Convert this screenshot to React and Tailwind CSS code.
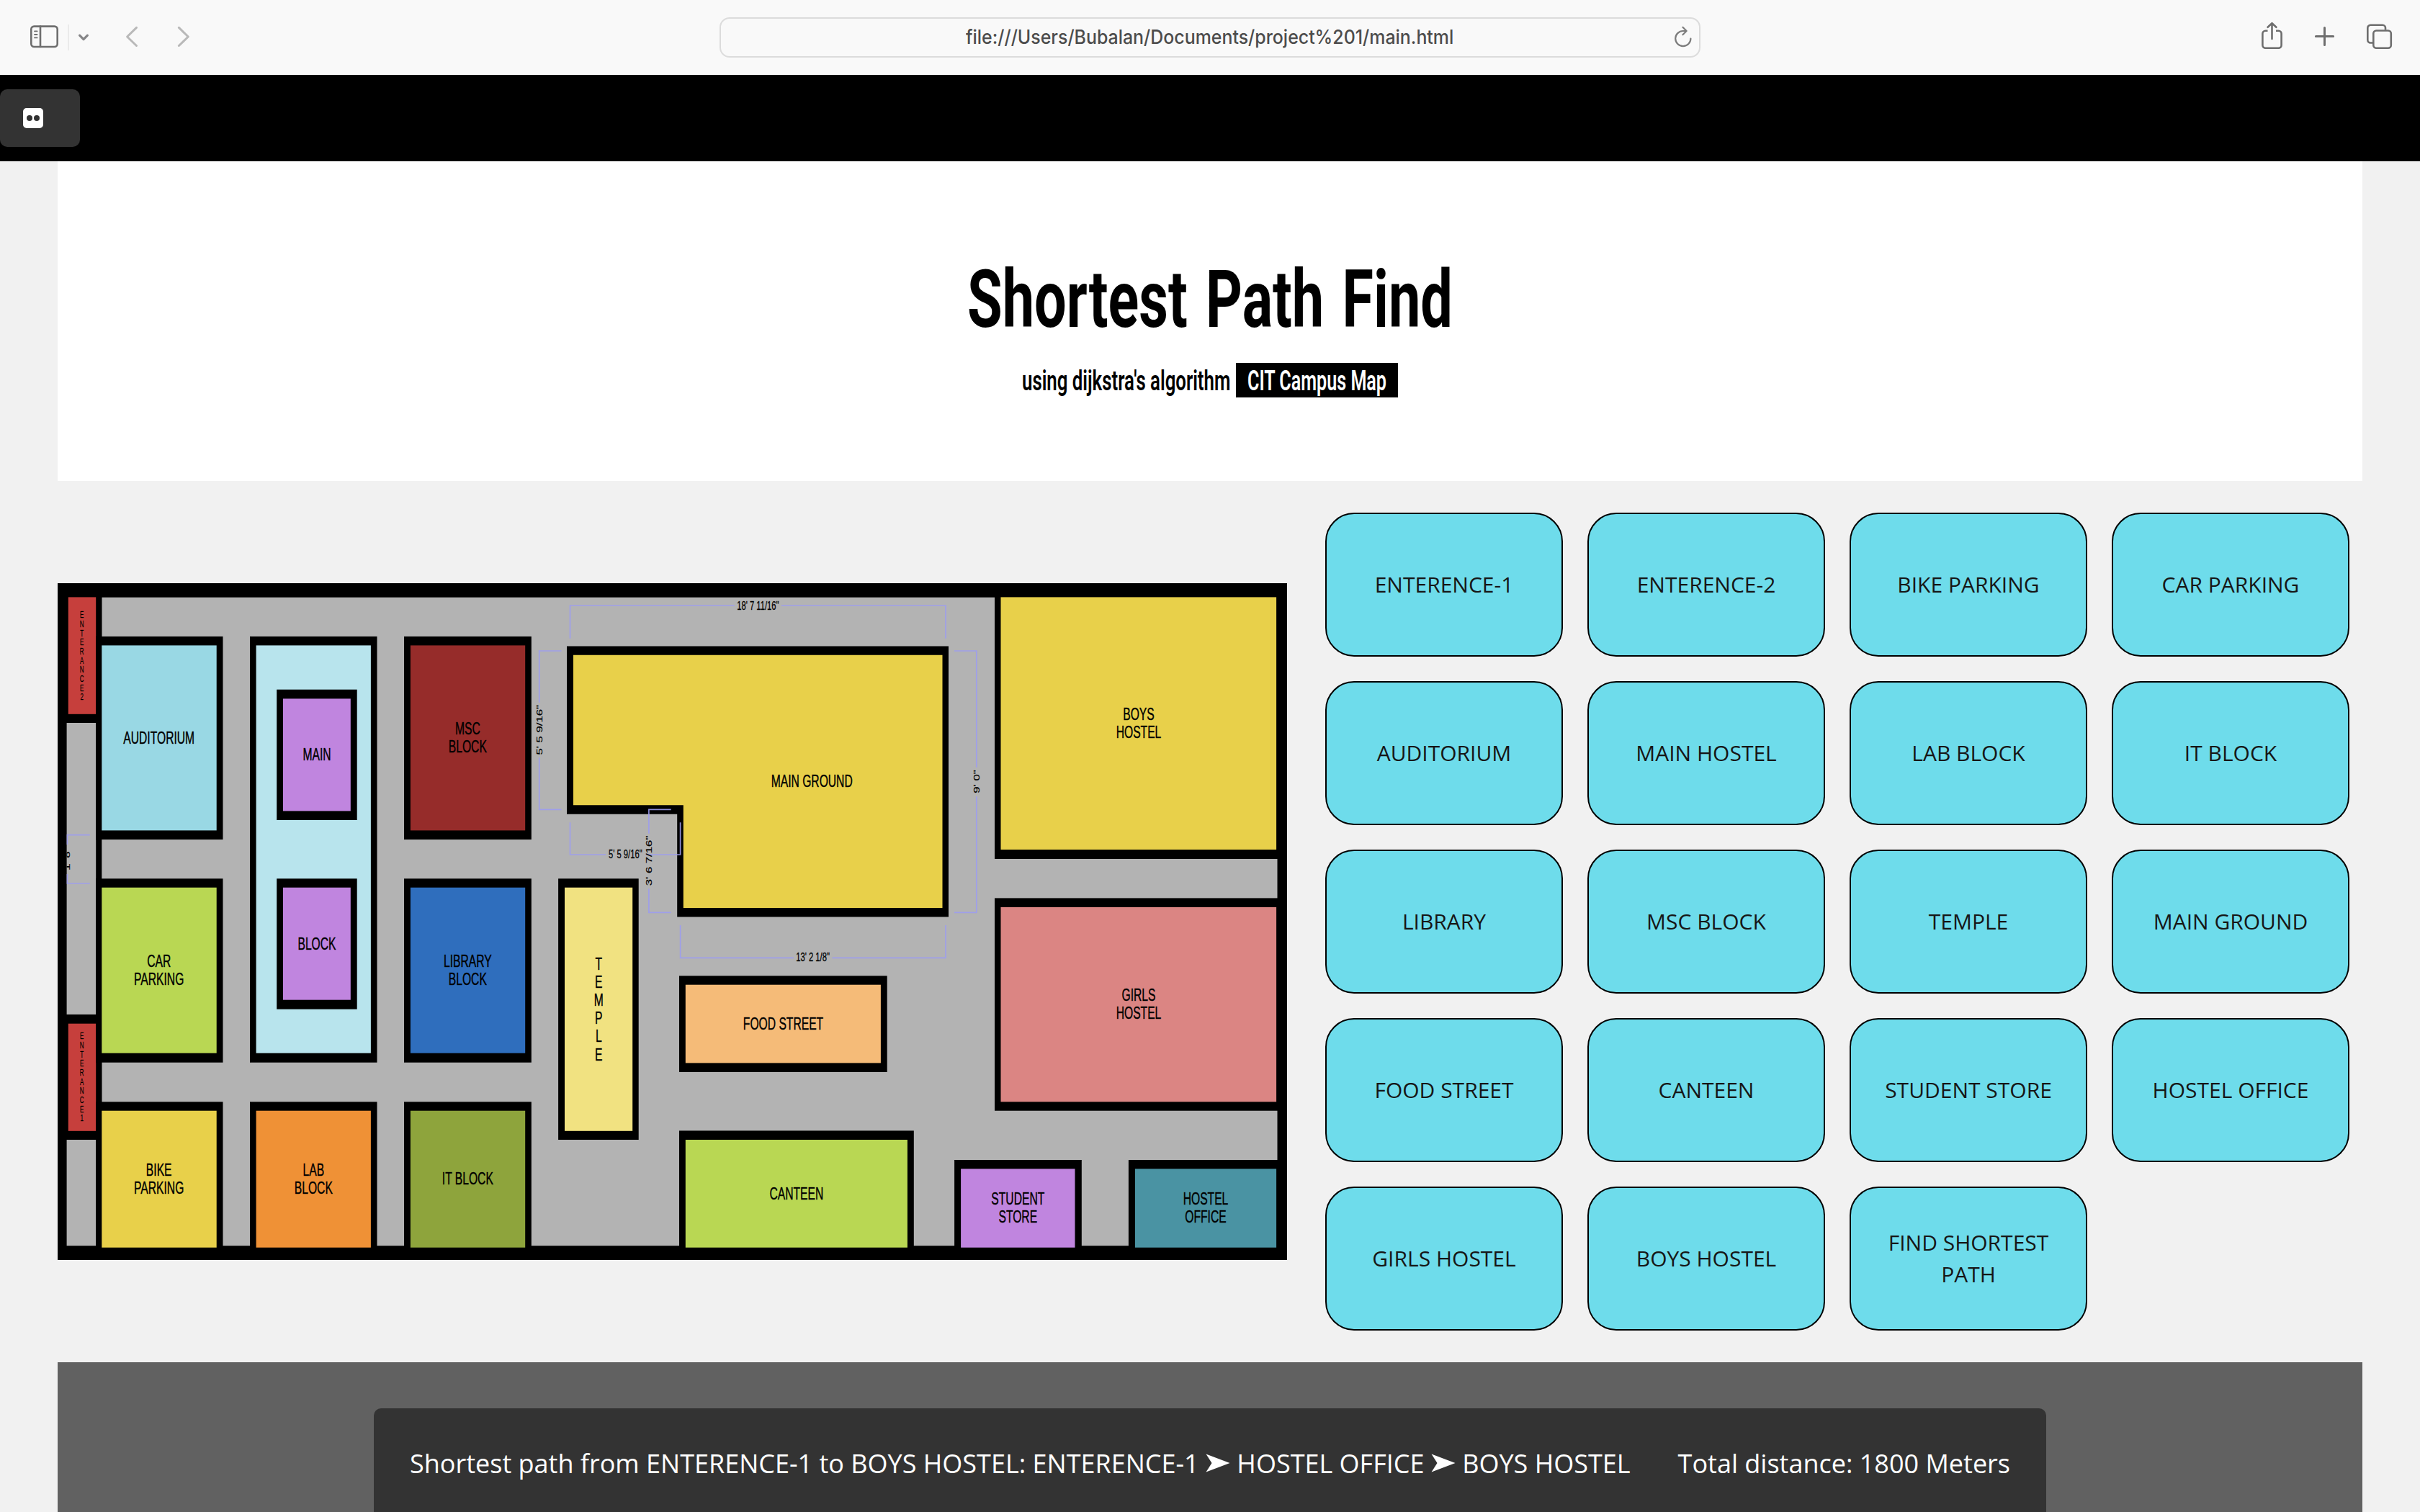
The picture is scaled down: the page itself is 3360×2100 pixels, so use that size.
import { useLayoutEffect, useRef, useState } from "react";

/* Condenses or expands a single line of text to a given width. */
function FitText({ width, className = "", children }) {
  const ref = useRef(null);
  const [scale, setScale] = useState(1);
  useLayoutEffect(() => {
    setScale(width / ref.current.offsetWidth);
  }, [width]);
  return (
    <span className={`block ${className}`} style={{ width }}>
      <span
        ref={ref}
        className="inline-block origin-left whitespace-nowrap"
        style={{ transform: `scaleX(${scale})` }}
      >
        {children}
      </span>
    </span>
  );
}

function Toolbar() {
  return (
    <header className="flex h-[104px] items-start bg-[#f9f9f9] text-[#6e6e6e]">
      <div className="flex w-[999px] pt-[30px] pl-[40px]">
        <svg width="44" height="42" viewBox="0 0 44 42" fill="none" stroke="currentColor" strokeWidth="2.6" strokeLinecap="round">
          <rect x="3.3" y="6.6" width="36.4" height="28.4" rx="4" />
          <path d="M16 6.6V35" />
          <path d="M8 13.4h3.6M8 18h3.6M8 22.4h3.6" strokeWidth="1.8" />
        </svg>
        <div className="mt-1 ml-[10px] h-9 w-[2px] bg-[#ebebeb]" />
        <svg className="ml-[10px]" width="22" height="42" viewBox="0 0 22 42" fill="none" stroke="#868688" strokeWidth="3.2" strokeLinecap="round" strokeLinejoin="round">
          <path d="M4.6 19.2 10 24.6 15.4 19.2" />
        </svg>
        <svg className="ml-[44px]" width="24" height="42" viewBox="0 0 24 42" fill="none" stroke="#b9b9b9" strokeWidth="3" strokeLinecap="round" strokeLinejoin="round">
          <path d="M17.5 8.4 4.6 21 17.5 33.5" />
        </svg>
        <svg className="ml-[46px]" width="24" height="42" viewBox="0 0 24 42" fill="none" stroke="#b9b9b9" strokeWidth="3" strokeLinecap="round" strokeLinejoin="round">
          <path d="M6.4 8.4 19.3 21 6.4 33.5" />
        </svg>
      </div>
      <div className="mt-6 flex h-14 w-[1362px] items-center rounded-[14px] border-2 border-[#dcdcdc] pr-[9px] text-[#4c4c4c]">
        <FitText width={677} className="ml-[340px] font-['Inter'] text-[27px] leading-[52px] font-medium">
          file:///Users/Bubalan/Documents/project%201/main.html
        </FitText>
        <svg className="ml-auto" width="26" height="32" viewBox="0 0 26 32" fill="none" stroke="#7c7c7c" strokeWidth="2.2" strokeLinecap="round" strokeLinejoin="round">
          <path d="M23.4 17.6A10.6 10.6 0 1 1 12.8 7h4.4" />
          <path d="M12.4 1.8 17.6 7 12.4 12.2" />
        </svg>
      </div>
      <div className="flex pt-[28px] pl-[775px]">
        <svg width="38" height="44" viewBox="0 0 38 44" fill="none" stroke="currentColor" strokeWidth="2.6" strokeLinecap="round" strokeLinejoin="round">
          <path d="M12.5 14.8H9.4a4 4 0 0 0-4 4v16a4 4 0 0 0 4 4h18.2a4 4 0 0 0 4-4v-16a4 4 0 0 0-4-4H24" strokeLinecap="butt" />
          <path d="M18.5 26V4.6M12.6 9.8l5.9-5.6 5.9 5.600" />
        </svg>
        <svg className="ml-[35px]" width="38" height="44" viewBox="0 0 38 44" fill="none" stroke="currentColor" strokeWidth="3" strokeLinecap="round">
          <path d="M18.5 10.400v24.200M6.400 22.500h24.200" />
        </svg>
        <svg className="ml-[35px]" width="42" height="44" viewBox="0 0 42 44" fill="none" stroke="currentColor" strokeWidth="2.6">
          <path d="M12 31.500H9.300a4 4 0 0 1-4-4V10.800a4 4 0 0 1 4-4H26a4 4 0 0 1 4 4V13.500" />
          <rect x="13.300" y="14.500" width="24.500" height="24.300" rx="4" />
        </svg>
      </div>
    </header>
  );
}

function TabStrip() {
  return (
    <nav className="h-[120px] bg-black py-5">
      <div className="flex h-20 w-[111px] items-center rounded-[10px] bg-[#333333] pl-8">
        <div className="flex h-7 w-7 items-center justify-center gap-[2px] rounded-[5px] bg-white">
          <span className="h-2 w-2 rounded-full bg-[#333333]" />
          <span className="h-2 w-2 rounded-full bg-[#333333]" />
        </div>
      </div>
    </nav>
  );
}

const SHADES = {
  red: "#c63f3c",
  sky: "#99d8e4",
  ice: "#b8e4ed",
  violet: "#c085df",
  maroon: "#962c2a",
  blue: "#2f6ebd",
  lime: "#b9d753",
  yellow: "#e8d04a",
  straw: "#f1e281",
  orange: "#ef9136",
  olive: "#8ea43c",
  peach: "#f5bb78",
  rose: "#db8583",
  teal: "#4a93a3",
};

/* wall: [x1, y1, x2, y2]; floor: [x1, y1, x2, y2]; lines: [text, baseline] */
const ROOMS = [
  { wall: [0, 0, 61.3, 194], floor: [14.8, 19.4, 53.2, 181.8], color: SHADES.red },
  { wall: [0, 599, 61.3, 773], floor: [14.8, 611.7, 53.2, 760.8], color: SHADES.red },
  { wall: [53.2, 74, 229.5, 356], floor: [61.3, 86.4, 220.7, 343.4], color: SHADES.sky, x: 140.7, lines: [["AUDITORIUM", 223]] },
  { wall: [53.2, 410.3, 229.5, 665.7], floor: [61.3, 422.7, 220.7, 652.7], color: SHADES.lime, x: 140.7, lines: [["CAR", 532.7], ["PARKING", 558]] },
  { wall: [53.2, 720.3, 229.5, 940], floor: [61.3, 732.7, 220.7, 922.7], color: SHADES.yellow, x: 140.7, lines: [["BIKE", 822.7], ["PARKING", 847.7]] },
  { wall: [267, 74, 443.5, 665.7], floor: [275.6, 86.4, 434.9, 652.7], color: SHADES.ice },
  { wall: [304.2, 147.7, 415.7, 329], floor: [313, 160.4, 406.8, 316.4], color: SHADES.violet, x: 360, lines: [["MAIN", 245.7]] },
  { wall: [304.2, 410.3, 415.7, 591.7], floor: [313, 422.7, 406.8, 578.7], color: SHADES.violet, x: 360, lines: [["BLOCK", 509]] },
  { wall: [267, 720.3, 443.5, 940], floor: [275.6, 732.7, 434.9, 922.7], color: SHADES.orange, x: 355.3, lines: [["LAB", 822.7], ["BLOCK", 847.7]] },
  { wall: [481, 74, 657.8, 356], floor: [489.9, 86.4, 649.2, 343.4], color: SHADES.maroon, x: 569.3, lines: [["MSC", 210], ["BLOCK", 235]] },
  { wall: [481, 410.3, 657.8, 665.7], floor: [489.9, 422.7, 649.2, 652.7], color: SHADES.blue, x: 569.3, lines: [["LIBRARY", 532.7], ["BLOCK", 558]] },
  { wall: [481, 720.3, 657.8, 940], floor: [489.9, 732.7, 649.2, 922.7], color: SHADES.olive, x: 569.3, lines: [["IT BLOCK", 835]] },
  { wall: [695.1, 410.3, 806.7, 773], floor: [704, 422.7, 798.2, 760.8], color: SHADES.straw },
  { wall: [863, 545.3, 1151.7, 679], floor: [871.8, 557.7, 1142.9, 666.4], color: SHADES.peach, x: 1007.5, lines: [["FOOD STREET", 620.3]] },
  { wall: [863, 760.4, 1188.8, 940], floor: [871.8, 773, 1179.9, 922.7], color: SHADES.lime, x: 1025.8, lines: [["CANTEEN", 855.7]] },
  { wall: [1301, 0, 1707, 383], floor: [1309.5, 19.4, 1692.1, 370], color: SHADES.yellow, x: 1501, lines: [["BOYS", 189.6], ["HOSTEL", 215.3]] },
  { wall: [1301, 437.4, 1707, 732.7], floor: [1309.5, 450, 1692.1, 720.3], color: SHADES.rose, x: 1501, lines: [["GIRLS", 580.3], ["HOSTEL", 605.3]] },
  { wall: [1245.1, 801, 1421.8, 940], floor: [1254.1, 813.4, 1412.5, 922.7], color: SHADES.violet, x: 1333.3, lines: [["STUDENT", 862.7], ["STORE", 888]] },
  { wall: [1486.9, 801, 1707, 940], floor: [1495.9, 813.4, 1692.1, 922.7], color: SHADES.teal, x: 1594, lines: [["HOSTEL", 862.7], ["OFFICE", 888]] },
];

function box([x1, y1, x2, y2]) {
  return { x: x1, y: y1, width: x2 - x1, height: y2 - y1 };
}

function PlanText({ x, y, size = 23.3, turn = 0, children }) {
  return (
    <text
      transform={`translate(${x} ${y}) scale(0.672 1) rotate(${turn})`}
      fontSize={size}
      textAnchor="middle"
      fill="#000"
      stroke="#000"
      strokeWidth={size / 45}
      strokeOpacity="0.8"
    >
      {children}
    </text>
  );
}

function CampusMap() {
  return (
    <svg className="shrink-0 font-['Liberation_Sans']" width="1707" height="940" viewBox="0 0 1707 940">
      <defs>
        <clipPath id="plan-area">
          <rect x="12.6" y="0" width="1694" height="940" />
        </clipPath>
      </defs>
      <rect width="1707" height="940" fill="#000" />
      <rect {...box([12.6, 19.7, 1693.5, 920.2])} fill="#b3b3b3" />
      <rect x="53.2" y="0" width="8.1" height="940" fill="#000" />
      {ROOMS.map((room, i) => (
        <g key={i}>
          <rect {...box(room.wall)} fill="#000" />
          <rect {...box(room.floor)} fill={room.color} />
          {room.lines?.map(([label, y]) => (
            <PlanText key={label} x={room.x} y={y}>{label}</PlanText>
          ))}
        </g>
      ))}
      <path d="M707 87.4H1237V463.4H860.2V320.7H707Z" fill="#000" />
      <path d="M716 99.8H1228.5V451H868.8V308.3H716Z" fill={SHADES.yellow} />
      <PlanText x={1047.2} y={283.3}>MAIN GROUND</PlanText>

      {[..."ENTERANCE2"].map((c, i) => (
        <PlanText key={i} x={33.7} y={48.2 + i * 12.67} size={11.9}>{c}</PlanText>
      ))}
      {[..."ENTERANCE1"].map((c, i) => (
        <PlanText key={i} x={33.7} y={633.2 + i * 12.67} size={11.9}>{c}</PlanText>
      ))}
      {[..."TEMPLE"].map((c, i) => (
        <PlanText key={i} x={751.3} y={537 + i * 25.1}>{c}</PlanText>
      ))}

      <g fill="none" stroke="#9c9cf0" strokeOpacity="0.9" strokeWidth="1.7">
        <path d="M711.5 76.7V31H939.6M1004.8 31H1233V76.7" />
        <path d="M699.5 94H668.7V165.7M668.7 242.3V314.3H699.5" />
        <path d="M711.5 332.3V377H761M816.4 377H864.6V332.3" />
        <path d="M851.7 314.3H820.9V347.7M820.9 424.3V457.3H851.7" />
        <path d="M864.6 475V520.3H1021.8M1075.4 520.3H1233V475" />
        <path d="M1245 94H1275.8V255.7M1275.8 296.3V457.3H1245" />
        <path d="M44.7 349.7H13.5V363M13.5 404V417H44.7" />
      </g>
      <PlanText x={972.3} y={37} size={16.7}>18' 7 11/16"</PlanText>
      <PlanText x={672.6} y={203.8} size={16.7} turn={-90}>5' 5 9/16"</PlanText>
      <PlanText x={788.3} y={382.2} size={16.7}>5' 5 9/16"</PlanText>
      <PlanText x={825} y={385.5} size={16.7} turn={-90}>3' 6 7/16"</PlanText>
      <PlanText x={1048.6} y={525.2} size={16.7}>13' 2 1/8"</PlanText>
      <PlanText x={1279.7} y={275.5} size={16.7} turn={-90}>9' 0"</PlanText>
      <g clipPath="url(#plan-area)">
        <PlanText x={17.2} y={382.7} size={16.7} turn={-90}>1' 8"</PlanText>
      </g>
    </svg>
  );
}

const PLACES = [
  "ENTERENCE-1", "ENTERENCE-2", "BIKE PARKING", "CAR PARKING",
  "AUDITORIUM", "MAIN HOSTEL", "LAB BLOCK", "IT BLOCK",
  "LIBRARY", "MSC BLOCK", "TEMPLE", "MAIN GROUND",
  "FOOD STREET", "CANTEEN", "STUDENT STORE", "HOSTEL OFFICE",
  "GIRLS HOSTEL", "BOYS HOSTEL", "FIND SHORTEST PATH",
];

function PlaceGrid() {
  return (
    <div className="grid w-[1422px] grid-cols-4 gap-[34px]">
      {PLACES.map((place) => (
        <button
          key={place}
          className="h-[200px] rounded-[40px] border-2 border-black bg-[#6edceb] px-8 text-center font-['Open_Sans'] text-[30px] leading-[44px] text-[#161616]"
        >
          {place}
        </button>
      ))}
    </div>
  );
}

function Arrow() {
  return (
    <span className="inline-block w-[34px] text-center">
      <svg className="inline-block align-[1px]" width="34" height="26" viewBox="0 0 34 26" fill="currentColor">
        <path d="M0.500 0.500 33.500 13 0.500 25.500 8.500 13Z" />
      </svg>
    </span>
  );
}

export default function App() {
  return (
    <div className="h-[2100px] w-[3360px] overflow-hidden bg-[#f1f1f1]">
      <Toolbar />
      <TabStrip />
      <main className="mx-20">
        <section className="flex h-[444px] flex-col items-center bg-white pt-[136px] font-['Roboto'] text-black">
          <h1 className="text-[111px] leading-[112px] font-bold [word-spacing:8px]">
            <FitText width={674}>Shortest Path Find</FitText>
          </h1>
          <p className="mt-8 flex gap-2 text-[38px] leading-[48px] font-semibold">
            <FitText width={289} className="pt-px">using dijkstra's algorithm</FitText>
            <span className="h-12 bg-black px-4 text-white">
              <FitText width={193} className="pt-px">CIT Campus Map</FitText>
            </span>
          </p>
        </section>
        <section className="flex items-center gap-[53px] py-11">
          <CampusMap />
          <PlaceGrid />
        </section>
        <section className="flex h-[208px] justify-center bg-[#616161] pt-16">
          <div className="flex h-[220px] w-[2322px] justify-between rounded-[10px] bg-[#333333] px-[50px] pt-[52px] font-['Open_Sans'] text-[36px] leading-[49px] whitespace-nowrap text-white">
            <p>
              Shortest path from ENTERENCE-1 to BOYS HOSTEL: ENTERENCE-1 <Arrow /> HOSTEL OFFICE <Arrow /> BOYS HOSTEL
            </p>
            <p>Total distance: 1800 Meters</p>
          </div>
        </section>
      </main>
    </div>
  );
}
